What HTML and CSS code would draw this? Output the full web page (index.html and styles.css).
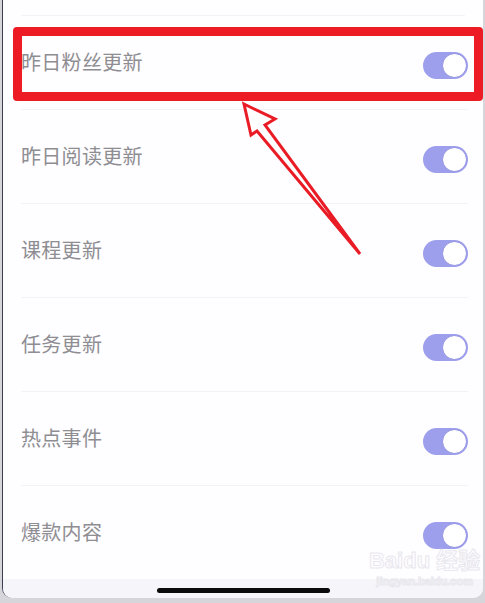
FILE: index.html
```html
<!DOCTYPE html>
<html lang="zh-CN">
<head>
  <meta charset="UTF-8" />
  <meta name="viewport" content="width=device-width, initial-scale=1" />
  <title>消息通知设置</title>
  <link rel="stylesheet" href="styles.css">
</head>
<body>
  <div class="sheet">
    <div class="top-gap"></div>
    <ul class="list">
      <li class="row"><span class="label">昨日粉丝更新</span><span class="switch on"></span></li>
      <li class="row"><span class="label">昨日阅读更新</span><span class="switch on"></span></li>
      <li class="row"><span class="label">课程更新</span><span class="switch on"></span></li>
      <li class="row"><span class="label">任务更新</span><span class="switch on"></span></li>
      <li class="row"><span class="label">热点事件</span><span class="switch on"></span></li>
      <li class="row last"><span class="label">爆款内容</span><span class="switch on"></span></li>
    </ul>
    <div class="home-bar"><span class="indicator"></span></div>

    <!-- annotation overlay -->
    <div class="mark-box"></div>
    <svg class="mark-arrow" width="485" height="603" viewBox="0 0 485 603">
      <polygon points="244,104 275,119 265,125 360,254 257,131 251,135" fill="#fff" stroke="#e91c26" stroke-width="3" stroke-linejoin="miter"/>
    </svg>

    <div class="watermark">
      <div class="wm-logo">Bai<span class="paw">du</span> 经验</div>
      <div class="wm-url">jingyan.baidu.com</div>
    </div>
  </div>
</body>
</html>
```

FILE: styles.css
```css
/* page frame */
body {
  margin: 0;
  background: #d6d6da;
  font-family: "Noto Sans CJK SC", "Noto Sans", sans-serif;
  height: 603px;
  overflow: hidden;
}
.sheet {
  position: relative;
  margin-left: 2px;
  width: 481px;
  height: 598px;
  background: #fefdff;
  border-radius: 0 0 10px 10px;
  border-left: 1px solid #3b3d52;
  box-sizing: border-box;
  overflow: hidden;
}
.top-gap {
  height: 15px;
  margin: 0 18px;
  border-bottom: 1px solid #f3f2f5;
}
/* setting rows */
.list {
  list-style: none;
  margin: 0;
  padding: 0;
}
.row {
  display: flex;
  align-items: center;
  justify-content: space-between;
  height: 94px;
  margin: 0 15px 0 18px;
  border-bottom: 1px solid #f3f2f5;
  box-sizing: border-box;
}
.row.last {
  height: 93px;
  border-bottom: none;
}
.label {
  font-size: 20px;
  color: #8e8d92;
  letter-spacing: 0.3px;
  margin-top: -3px;
}
/* toggle */
.switch {
  position: relative;
  width: 45px;
  height: 27px;
  border-radius: 14px;
  background: #9e9fec;
  margin-top: 5px;
}
.switch::after {
  content: "";
  position: absolute;
  right: 1px;
  top: 1px;
  width: 23px;
  height: 23px;
  border-radius: 50%;
  background: #fff;
  border: 1px solid #8f8fe2;
}
/* bottom home indicator */
.home-bar {
  height: 19px;
  background: #f6f5f9;
  display: flex;
  justify-content: center;
  padding-top: 9px;
  box-sizing: border-box;
}
.indicator {
  width: 173px;
  height: 5px;
  border-radius: 3px;
  background: #0a0a0a;
}
/* red annotation */
.mark-box {
  position: absolute;
  left: 10px;
  top: 27px;
  width: 470px;
  height: 74px;
  border: 9px solid #ed1c24;
  border-radius: 4px;
  box-sizing: border-box;
}
.mark-arrow {
  position: absolute;
  left: -3px;
  top: 0;
}
/* watermark */
.watermark {
  position: absolute;
  left: 366px;
  top: 548px;
  color: transparent;
  -webkit-text-stroke: 1px #e9e8ee;
  font-family: "Liberation Sans", "Noto Sans CJK SC", sans-serif;
  text-align: center;
}
.wm-logo {
  font-size: 22px;
  font-weight: bold;
  line-height: 26px;
}
.wm-url {
  font-size: 11px;
  font-weight: bold;
  line-height: 14px;
}
```
